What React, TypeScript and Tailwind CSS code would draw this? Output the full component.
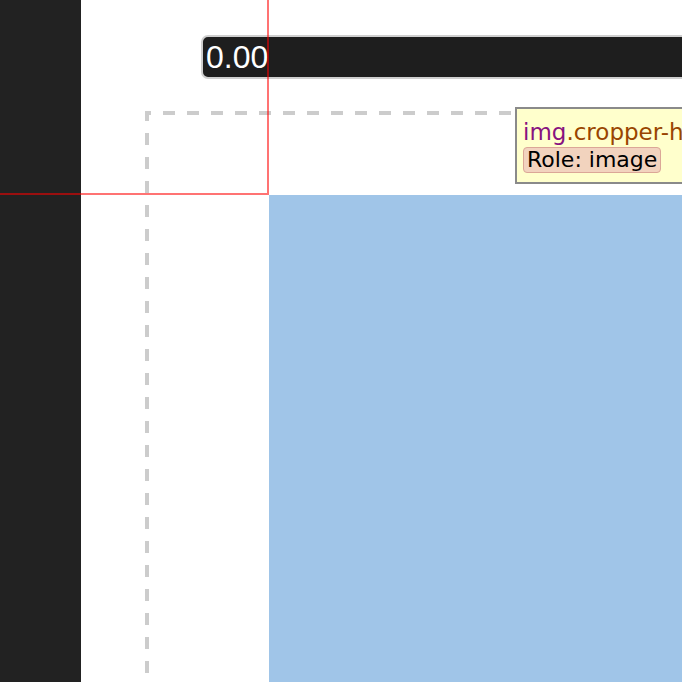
import React from "react";

export default function App() {
  return (
    <div className="relative w-[682px] h-[682px] overflow-hidden flex bg-white">
      <div className="w-[81px] shrink-0 bg-[#222222]" />
      <div className="flex-1 flex flex-col min-w-0">
        <div className="pt-[35px] pl-[120px]">
          <div className="h-[44px] w-[520px] rounded-[7px] border-2 border-[#cfcfcf] bg-[#1e1e1e] flex items-center pl-[3px]">
            <span className="text-white text-[32px] leading-none font-['Liberation_Sans',Arial,sans-serif]">0.00</span>
          </div>
        </div>
        <div className="mt-[32px] ml-[64px] w-[700px] h-[600px] shrink-0 pl-[124px] pt-[84px] [background-image:linear-gradient(90deg,#cccccc_12px,transparent_12px),linear-gradient(180deg,#cccccc_12px,transparent_12px)] [background-size:24px_4px,4px_24px] [background-repeat:repeat-x,repeat-y] [background-position:18px_0,0_22px]">
          <div className="w-full h-full bg-[#a0c5e8]" />
        </div>
      </div>

      <div className="absolute left-0 top-0 w-[269px] h-[195px] border-r-2 border-b-2 border-[rgba(255,0,0,0.55)] pointer-events-none" />

      <div className="absolute left-[515px] top-[107px] w-[260px] h-[77px] bg-[#ffffcc] border-2 border-[#8a8a8a] pl-[6px] pt-[10px] font-['DejaVu_Sans',sans-serif] text-[23px] leading-[27px]">
        <div className="whitespace-nowrap">
          <span className="text-[#881280]">img</span>
          <span className="text-[#994500]">.cropper-hidden</span>
        </div>
        <div className="mt-[0px] inline-flex items-center h-[26px] px-[3px] rounded-[4px] bg-[#f2d3be] border border-[#dba797] text-black text-[22px]">
          Role: image
        </div>
      </div>
    </div>
  );
}
